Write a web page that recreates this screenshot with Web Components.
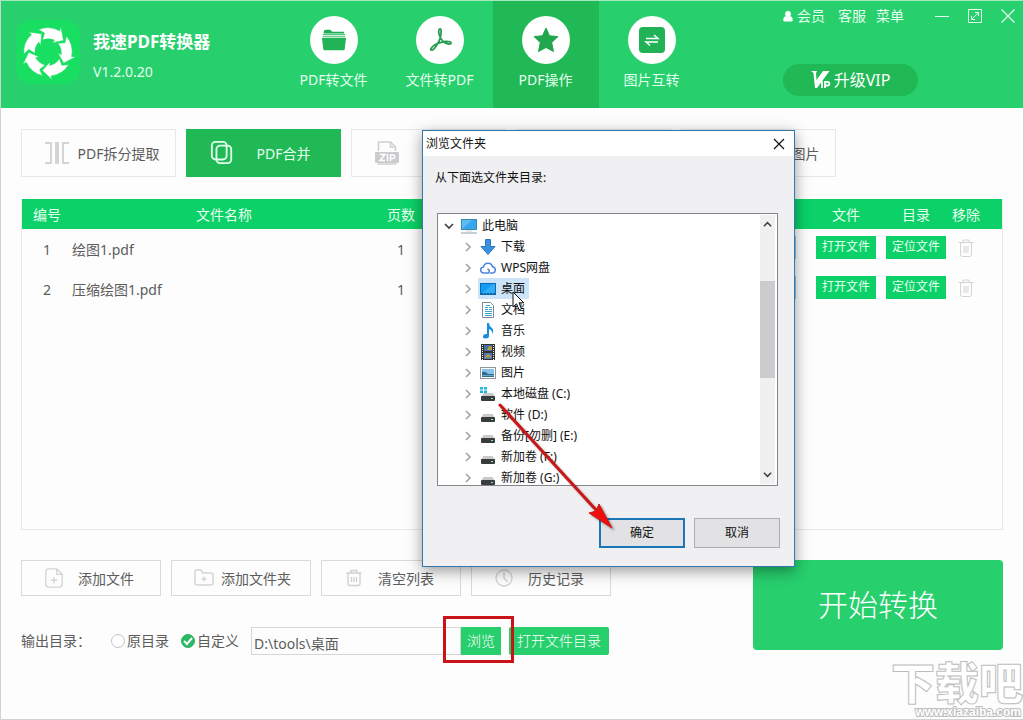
<!DOCTYPE html>
<html lang="zh-CN">
<head>
<meta charset="utf-8">
<title>我速PDF转换器</title>
<style>
    :root {
        --green: #27cf6d;
        --green-dark: #21b955;
        --green-table: #0bd168;
        --line: #e8e8ea;
        --text: #5c5c5c;
    }

    body {
        margin: 0;
        font-family: "Noto Sans", "Noto Sans CJK SC", sans-serif;
        font-size: 14px;
        line-height: 20px;
        color: var(--text);
        background: #fdfdfd;
    }
</style>
</head>
<body>
<app-window></app-window>

<script>
const ICONS = {
    logo: ['0 0 64 64', `
        <rect width="64" height="64" rx="14" fill="#18df62"/>
        <g fill="#fff" stroke="#18df62" stroke-width=".6">
            ${[0, 72, 144, 216, 288].map(a => `<path transform="rotate(${a} 32 32)" d="M22.500 9.700Q33 5 43.500 10.800L45 7 47.500 20.500 36 23 38.500 20.200Q32.500 17.500 26.600 20L28.500 13z"/>`).join('')}
        </g>`],
    folder: ['0 0 28 24', '<path d="M3 5V3q0-2 2-2h5l2 2h12q1 0 1 2z" fill="#1fae57"/><path d="M2 6h24M2 8h24" stroke="#35bd69"/><path d="M1 9.500h26l-1.500 12.500q0 1-1 1h-21q-1 0-1-1z" fill="#21b356"/>'],
    acrobat: ['0 0 26 26', '<path d="M12 2c-1.600 0-1.600 3-.7 6 1.500 4.500 5 8.500 9.300 9 3.300.3 3.300-2.100 0-2.400-4.500-.4-10.500 1.200-14.300 3.600-3 1.900-4.500 5-2.800 5 2.800 0 7.300-7.700 8.800-12.500C13.300 6 13.700 2 12 2z" transform="translate(1 0)" fill="none" stroke="#2a9d53" stroke-width="1.800"/>'],
    star: ['0 0 26 26', '<path d="M13 1l3.500 7.800 8.500.8-6.300 6 1.800 8.900L13 20.500 5.500 24.500l1.800-8.900L1 9.600l8.500-.8z" fill="#20a74d" stroke="#20a74d" stroke-linejoin="round"/>'],
    swap: ['0 0 26 26', '<rect width="26" height="26" rx="4" fill="#21b257"/><path d="M7 11.500h12l-4-3.500M19 15H7l4 3.500" fill="none" stroke="#fff" stroke-width="1.500"/>'],
    user: ['0 0 12 13', '<circle cx="6" cy="3.500" r="3.500" fill="#fff"/><path d="M1 12V9q0-2 2.500-2.500 2.500 1.800 5 0Q11 7 11 9v3z" fill="#fff" stroke="#fff"/>'],
    minimize: ['0 0 16 16', '<path d="M1 8.500h14" stroke="#e4ffef"/>'],
    maximize: ['0 0 16 16', '<path d="M1.500 1.500h13v13h-13zM5 11l6-6M8 4.500h3.500V8M4.500 8v3.500H8" fill="none" stroke="#e4ffef"/>'],
    close: ['0 0 16 16', '<path d="M1.500 1.500l13 13M14.500 1.500l-13 13" stroke="#e4ffef" stroke-width="1.300"/>'],
    vip: ['0 0 20 18', '<path d="M0 0h6l-1 2 .5 7L12 0h6.500L6 17H4L2.500 2z" fill="#fff"/><path d="M11 10v7M14 17v-6.200h2.500a1.800 1.800 0 0 1 0 3.700H14" fill="none" stroke="#fff" stroke-width="1.800"/>'],
    split: ['0 0 24 24', '<path d="M0 2h6v20H0M24 2h-6v20h6" fill="none" stroke="#d5d3d6" stroke-width="2"/><path d="M10 1h4v22h-4z" fill="#d5d3d6"/>'],
    merge: ['0 0 24 26', '<rect x="1" y="1" width="16" height="19" rx="4" fill="none" stroke="#e2ffeb" stroke-width="2"/><rect x="6" y="5" width="16" height="19" rx="4" fill="none" stroke="#e2ffeb" stroke-width="2"/>'],
    zip: ['0 0 24 24', '<path d="M3.500 10V1h12l5 5v4M15.500 1v5h5M3.500 20v3h17v-3" fill="none" stroke="#d0ced1" stroke-width="1.500"/><rect y="11" width="24" height="11" rx="1" fill="#cdcbce"/><path d="M5 13.500h5l-5 6h5M12.500 13v7M15.500 20v-6h2.500a1.500 1.500 0 0 1 0 3.500h-2" fill="none" stroke="#fff" stroke-width="1.500"/>'],
    picture: ['0 0 24 24', '<rect x="1" y="3" width="22" height="18" fill="none" stroke="#d5d3d6" stroke-width="2"/><path d="M3 18l6-7 5 5 3-3 4 5" fill="none" stroke="#d5d3d6" stroke-width="2"/>'],
    trash: ['0 0 16 18', '<path d="M.5 3.500h15M5 3.500V1h6v2.500M2.500 3.500v12q0 2 2 2h7q2 0 2-2v-12M6 7v7M8 7v7M10 7v7" fill="none" stroke="#cfcdd2" stroke-width=".9"/>'],
    addFile: ['0 0 20 22', '<path d="M4 1h9l6 6v11q0 3-3 3H4q-3 0-3-3V4q0-3 3-3zM13 1v6h6M10 10v7M6.500 13.500h7" fill="none" stroke="#d5d5d5" stroke-width="1.500"/>'],
    addFolder: ['0 0 20 18', '<path d="M1 3q0-2 2-2h4l2 3h8q2 0 2 2v8q0 2-2 2H3q-2 0-2-2zM10 7.500v5M7.500 10h5" fill="none" stroke="#d5d5d5" stroke-width="1.500"/>'],
    clear: ['0 0 18 20', '<path d="M1.500 5h15M6 5V2.500h6V5M3 5v10.500q0 2 2 2h8q2 0 2-2V5M6.500 9v5M9 9v5M11.500 9v5" fill="none" stroke="#d0d0d0" stroke-width="1.300"/>'],
    clock: ['0 0 20 20', '<circle cx="10" cy="10" r="8" fill="none" stroke="#d0d0d0" stroke-width="1.300"/><path d="M10 4v6l3.500 4" fill="none" stroke="#d0d0d0" stroke-width="1.300"/>'],
    closeDark: ['0 0 12 12', '<path d="M1 1l10 10M11 1L1 11" stroke="#111" stroke-width="1.200"/>'],
    chevronRight: ['0 0 10 10', '<path d="M3 1l4 4-4 4" fill="none" stroke="#a3a3a3" stroke-width="1.600"/>'],
    chevronDown: ['0 0 10 10', '<path d="M1 3l4 4 4-4" fill="none" stroke="#404040" stroke-width="1.700"/>'],
    chevronUp: ['0 0 10 10', '<path d="M1 7l4-4 4 4" fill="none" stroke="#404040" stroke-width="1.700"/>'],
    computer: ['0 0 16 16', '<rect x=".5" y="1.500" width="15" height="10" fill="#5dbcf5" stroke="#3d87ad"/><path d="M1 11L11 2h4v9z" fill="#39a5ec"/><path d="M5 13h6" stroke="#c5d5dc"/><path d="M0 15h16" stroke="#8ba0a9"/>'],
    download: ['0 0 16 16', '<path d="M5.500.5h5v7H15L8 15.500 1 7.500h4.500z" fill="#3a8fe0" stroke="#2d78bf"/>'],
    cloud: ['0 0 16 16', '<path d="M4 13a3 3 0 0 1-.5-6 4.600 4.600 0 0 1 9-.3 3.200 3.200 0 0 1 .3 6.300H10M4 13h4.500q2-3-1-4" fill="none" stroke="#4c86dc" stroke-width="1.500"/>'],
    desktop: ['0 0 16 16', '<rect x=".5" y="2.500" width="15" height="11" fill="#129cf3" stroke="#0c6bb0"/><path d="M1 13L13 3h2v10z" fill="#33adf7"/><path d="M1 12.500h14" stroke="#0d5f9e" stroke-dasharray="2 1"/>'],
    document: ['0 0 16 16', '<path d="M2.500.5h8l3 3v12h-11z" fill="#fff" stroke="#7e8b93"/><path d="M5 5.500h3M9 5.500h3M5 7.500h3M9 7.500h3M5 9.500h7M5 11.500h7M5 13.500h7M6 3.500h4" stroke="#3fa2cf"/>'],
    music: ['0 0 16 16', '<path d="M7 0h2q0 3 3 5 2.500 2.500 0 6 .5-4-3-5v7q0 2.500-3.500 2.500-3 0-2.500-2.500.8-2.500 4-2z" fill="#168fdc"/>'],
    video: ['0 0 16 16', '<path d="M1 0h14v16H1z" fill="#333"/><path d="M2.500 1v15M13.500 1v15" stroke="#e8e8e8" stroke-dasharray="1 1"/><path d="M4 1h8v6H4z" fill="#496fa5"/><path d="M4 9h8v6H4z" fill="#5579b6"/><path d="M7 6l2-4 3 1v3zM4 14l4-4 4 3z" fill="#b59a48"/>'],
    image: ['0 0 16 16', '<rect x=".5" y="2.500" width="15" height="11" fill="#fff" stroke="#8e979c"/><path d="M2 4h12v8H2z" fill="#87c2ed"/><path d="M2 7q4-1 6 2h6v3H2z" fill="#356d86"/><path d="M2 10.500h12" stroke="#5fa7cc"/>'],
    drive: ['0 0 16 16', '<path d="M3.500 7h9l2.500 4H1z" fill="#c9c9c9"/><rect x="1" y="10" width="14" height="5" rx="1" fill="#383c3e"/><path d="M11 12.500h2" stroke="#7df6a2"/>'],
    system: ['0 0 16 16', '<path d="M4 7h9l2 4H1z" fill="#c9c9c9"/><rect x="1" y="10" width="14" height="5" rx="1" fill="#383c3e"/><path d="M11 12.500h2" stroke="#7df6a2"/><path d="M0 1h3v2.500H0zM4 1h3v2.500H4zM0 4.500h3V7H0zM4 4.500h3V7H4z" fill="#22b3da"/>']
};

class AppIcon extends HTMLElement {
    connectedCallback() {
        const [box, shapes] = ICONS[this.getAttribute('name')];
        this.attachShadow({ mode: 'open' }).innerHTML = `
            <style>
                :host { display: inline-block; flex: none; width: 16px; height: 16px; }
                svg { display: block; width: 100%; height: 100%; }
            </style>
            <svg viewBox="${box}" aria-hidden="true">${shapes}</svg>
        `;
    }
}

class NavTab extends HTMLElement {
    connectedCallback() {
        this.attachShadow({ mode: 'open' }).innerHTML = `
            <style>
                :host { display: block; width: 106px; }
                button {
                    display: flex;
                    flex-direction: column;
                    align-items: center;
                    gap: 6px;
                    width: 100%;
                    height: 100%;
                    padding: 15px 1px 0 0;
                    border: 0;
                    background: none;
                    font: inherit;
                    color: #e4ffef;
                }
                :host([active]) button { background: var(--green-dark); }
                .disc {
                    display: flex;
                    align-items: center;
                    justify-content: center;
                    width: 48px;
                    height: 48px;
                    border-radius: 50%;
                    background: #fff;
                }
                app-icon { width: 26px; height: 26px; }
            </style>
            <button type="button">
                <span class="disc"><app-icon name="${this.getAttribute('icon')}"></app-icon></span>
                <slot></slot>
            </button>
        `;
    }
}

class AppHeader extends HTMLElement {
    connectedCallback() {
        this.attachShadow({ mode: 'open' }).innerHTML = `
            <style>
                :host {
                    display: flex;
                    height: 107px;
                    background: var(--green);
                    color: #e4ffef;
                }
                .brand {
                    display: flex;
                    align-items: center;
                    gap: 13px;
                    width: 265px;
                    padding-left: 15px;
                }
                .brand app-icon { width: 64px; height: 64px; margin-bottom: 6px; }
                .brand div { padding-top: 2px; }
                h1 { margin: 0 0 8px; font-size: 17px; line-height: 24px; color: #fff; }
                p { margin: 0; }
                nav { display: flex; }
                .side {
                    display: flex;
                    flex-direction: column;
                    gap: 38px;
                    width: 233px;
                    margin-left: auto;
                    padding: 5px 7px 0 0;
                }
                .top, .links, .controls { display: flex; align-items: center; }
                .top { justify-content: space-between; }
                .links { gap: 10px; }
                a { display: flex; align-items: center; gap: 4px; color: inherit; text-decoration: none; }
                a:first-child { margin-right: 3px; }
                a app-icon { width: 10px; height: 13px; }
                .controls { gap: 17px; }
                .controls button { display: flex; padding: 0; border: 0; background: none; }
                .vip {
                    display: flex;
                    align-items: center;
                    justify-content: center;
                    gap: 3px;
                    width: 135px;
                    height: 32px;
                    padding: 0;
                    border: 0;
                    border-radius: 16px;
                    background: var(--green-dark);
                    font: inherit;
                    font-size: 16px;
                    color: #fff;
                }
                .vip app-icon { width: 20px; height: 18px; }
            </style>
            <div class="brand">
                <app-icon name="logo"></app-icon>
                <div>
                    <h1>我速PDF转换器</h1>
                    <p>V1.2.0.20</p>
                </div>
            </div>
            <nav>
                <nav-tab icon="folder">PDF转文件</nav-tab>
                <nav-tab icon="acrobat">文件转PDF</nav-tab>
                <nav-tab icon="star" active>PDF操作</nav-tab>
                <nav-tab icon="swap">图片互转</nav-tab>
            </nav>
            <div class="side">
                <div class="top">
                    <div class="links">
                        <a href="#"><app-icon name="user"></app-icon>会员</a>
                        <a href="#">客服</a>
                        <a href="#">菜单</a>
                    </div>
                    <div class="controls">
                        <button type="button" aria-label="最小化"><app-icon name="minimize"></app-icon></button>
                        <button type="button" aria-label="最大化"><app-icon name="maximize"></app-icon></button>
                        <button type="button" aria-label="关闭"><app-icon name="close"></app-icon></button>
                    </div>
                </div>
                <button class="vip" type="button"><app-icon name="vip"></app-icon>升级VIP</button>
            </div>
        `;
    }
}

// Outlined button with an icon; size="large" is the tool row, the default is the list row
class ActionButton extends HTMLElement {
    connectedCallback() {
        this.attachShadow({ mode: 'open' }).innerHTML = `
            <style>
                :host { display: block; width: 140px; height: 36px; }
                :host([size="large"]) { width: 155px; height: 48px; }
                button {
                    display: flex;
                    align-items: center;
                    width: 100%;
                    height: 100%;
                    padding: 0 0 0 22px;
                    border: 1px solid #dadada;
                    background: #fdfdfd;
                    font: inherit;
                    color: inherit;
                }
                :host([size="large"]) button { border-color: var(--line); }
                :host([active]) button {
                    border-color: var(--green-dark);
                    background: var(--green-dark);
                    color: #e4ffef;
                }
                app-icon { width: 20px; height: 20px; }
                :host([size="large"]) app-icon { width: 26px; height: 24px; }
                .label { flex: 1; padding: 1px 12px 0 0; text-align: center; }
                :host([size="large"]) .label { padding-right: 8px; }
            </style>
            <button type="button">
                <app-icon name="${this.getAttribute('icon')}"></app-icon>
                <span class="label"><slot></slot></span>
            </button>
        `;
    }
}

class FileTable extends HTMLElement {
    connectedCallback() {
        const files = [
            { name: '绘图1.pdf', pages: 1 },
            { name: '压缩绘图1.pdf', pages: 1 }
        ];
        this.attachShadow({ mode: 'open' }).innerHTML = `
            <style>
                :host { display: block; border: 1px solid var(--line); border-top: 0; }
                table { width: 100%; border-collapse: collapse; table-layout: fixed; }
                th { height: 29px; padding: 1px 0 0; background: var(--green-table); color: #e4ffef; font-weight: 400; }
                td { height: 38px; padding: 2px 0 0; text-align: center; }
                .num { width: 50px; }
                .name { width: 304px; }
                .act { width: 70px; }
                .del { width: 30px; padding-right: 21px; }
                td.name { text-align: left; }
                td.range { text-align: right; }
                td.act, td.range { height: 36px; padding: 0 0 4px; }
                td.del { height: 38px; padding: 0 21px 2px 0; }
                input {
                    box-sizing: border-box;
                    width: 120px;
                    height: 23px;
                    margin-right: 15px;
                    border: 1px solid #8fc3ee;
                    background: #fff;
                }
                .act button {
                    width: 60px;
                    height: 23px;
                    padding: 0;
                    border: 0;
                    background: var(--green-table);
                    font: inherit;
                    font-size: 12px;
                    color: #e4ffef;
                }
                .del button { display: block; margin: 0 auto; padding: 0; border: 0; background: none; }
                .del app-icon { display: block; height: 18px; }
            </style>
            <table>
                <thead>
                    <tr>
                        <th class="num">编号</th>
                        <th class="name">文件名称</th>
                        <th class="num">页数</th>
                        <th class="range"></th>
                        <th class="act">文件</th>
                        <th class="act">目录</th>
                        <th class="del">移除</th>
                    </tr>
                </thead>
                <tbody>
                    ${files.map((file, i) => `
                        <tr>
                            <td>${i + 1}</td>
                            <td class="name">${file.name}</td>
                            <td>${file.pages}</td>
                            <td class="range"><input type="text" aria-label="页码范围"></td>
                            <td class="act"><button type="button">打开文件</button></td>
                            <td class="act"><button type="button">定位文件</button></td>
                            <td class="del"><button type="button" aria-label="移除"><app-icon name="trash"></app-icon></button></td>
                        </tr>
                    `).join('')}
                </tbody>
            </table>
        `;
    }
}

class OutputBar extends HTMLElement {
    connectedCallback() {
        this.attachShadow({ mode: 'open' }).innerHTML = `
            <style>
                :host { display: flex; align-items: center; height: 28px; }
                .title { width: 90px; }
                label { display: flex; align-items: center; gap: 2px; margin-right: 12px; }
                input[type="radio"] {
                    appearance: none;
                    width: 14px;
                    height: 14px;
                    margin: 0;
                    border: 1px solid #c4c4c4;
                    border-radius: 50%;
                    background: #fff;
                }
                input[type="radio"]:checked {
                    border-color: #2bb863;
                    background: #2bb863 url("data:image/svg+xml,%3Csvg xmlns='http://www.w3.org/2000/svg' viewBox='0 0 12 12'%3E%3Cpath d='M2 6l3 3 5-6' fill='none' stroke='white' stroke-width='2'/%3E%3C/svg%3E");
                }
                input[type="text"] {
                    box-sizing: border-box;
                    width: 210px;
                    height: 28px;
                    padding: 3px 2px 0;
                    border: 1px solid #d6d6d6;
                    background: #fdfdfd;
                    font: inherit;
                    color: inherit;
                }
                button {
                    height: 28px;
                    padding: 0;
                    border: 0;
                    background: var(--green);
                    font: inherit;
                    font-weight: 300;
                    color: #fff;
                }
                .browse { position: relative; display: flex; margin-right: 8px; }
                .browse button { width: 40px; }
                .browse::after {
                    content: '';
                    position: absolute;
                    inset: -11px -13px -8px -18px;
                    border: 3px solid #ca1316;
                }
                .open { width: 100px; border-radius: 2px; }
            </style>
            <span class="title">输出目录：</span>
            <label><input type="radio" name="target">原目录</label>
            <label><input type="radio" name="target" checked>自定义</label>
            <input type="text" value="D:\\tools\\桌面" aria-label="输出目录">
            <span class="browse"><button type="button">浏览</button></span>
            <button class="open" type="button">打开文件目录</button>
        `;
    }
}

class TreeItem extends HTMLElement {
    connectedCallback() {
        const open = this.hasAttribute('open');
        this.attachShadow({ mode: 'open' }).innerHTML = `
            <style>
                :host { display: flex; align-items: center; gap: 5px; height: 21px; padding-left: 25px; }
                :host([open]) { padding-left: 6px; }
                .chevron { width: 10px; height: 10px; }
                .entry {
                    display: flex;
                    align-items: center;
                    gap: 5px;
                    height: 21px;
                    padding: 0 4px 0 2px;
                }
                :host([selected]) .entry { background: #cce4fa; }
            </style>
            <app-icon class="chevron" name="${open ? 'chevronDown' : 'chevronRight'}"></app-icon>
            <span class="entry">
                <app-icon name="${this.getAttribute('icon')}"></app-icon>
                <slot></slot>
            </span>
        `;
    }
}

class FolderDialog extends HTMLElement {
    connectedCallback() {
        this.attachShadow({ mode: 'open' }).innerHTML = `
            <style>
                :host {
                    display: block;
                    box-sizing: border-box;
                    width: 373px;
                    border: 1px solid #3479ad;
                    background: #f0eff1;
                    box-shadow: 0 4px 14px rgba(0, 0, 0, 0.4);
                    font-size: 12px;
                    line-height: 18px;
                    color: #111;
                }
                header {
                    display: flex;
                    align-items: center;
                    justify-content: space-between;
                    height: 25px;
                    padding: 0 9px 0 3px;
                    background: #fff;
                }
                header button { display: flex; padding: 0; border: 0; background: none; }
                header app-icon { width: 12px; height: 12px; }
                p { margin: 13px 12px 26px; }
                .tree {
                    display: flex;
                    box-sizing: border-box;
                    height: 273px;
                    margin: 0 16px 0 14px;
                    border: 1px solid #84868c;
                    background: #fff;
                    overflow: hidden;
                }
                .items { flex: 1; padding-top: 1px; }
                .scroll {
                    display: flex;
                    flex-direction: column;
                    align-items: center;
                    justify-content: space-between;
                    width: 15px;
                    margin: 1px 2px 1px 0;
                    padding: 5px 0;
                    box-sizing: border-box;
                    background: #f0f0f0;
                }
                .scroll app-icon { width: 9px; height: 9px; }
                .thumb { width: 15px; height: 97px; margin-bottom: 40px; background: #cdcbce; }
                footer { display: flex; justify-content: flex-end; gap: 9px; padding: 32px 14px 18px; }
                footer button {
                    box-sizing: border-box;
                    width: 86px;
                    height: 30px;
                    border: 1px solid #adadad;
                    background: #e2e1e3;
                    font: inherit;
                    color: inherit;
                }
                footer .ok { border: 2px solid #1b76b8; }
                .marks { position: absolute; inset: 0; width: 100%; height: 100%; overflow: visible; pointer-events: none; }
            </style>
            <header>浏览文件夹<button type="button" aria-label="关闭"><app-icon name="closeDark"></app-icon></button></header>
            <p>从下面选文件夹目录:</p>
            <div class="tree">
                <div class="items"><slot></slot></div>
                <div class="scroll">
                    <app-icon name="chevronUp"></app-icon>
                    <div class="thumb"></div>
                    <app-icon name="chevronDown"></app-icon>
                </div>
            </div>
            <footer>
                <button class="ok" type="button">确定</button>
                <button type="button">取消</button>
            </footer>
            <svg class="marks" aria-hidden="true">
                <path d="M90 161v15l3.500-3.200 2.500 6 2.500-1-2.500-6h4.800z" fill="#fff" stroke="#111"/>
                <g style="filter: drop-shadow(2px 2px 1px rgba(0, 0, 0, 0.35))">
                    <path d="M77 274l97 106" stroke="#c91616" stroke-width="3" stroke-linecap="round"/>
                    <path d="M189 397l-23-15 7-2 3-7z" fill="#f00d0d" stroke="#c91616"/>
                </g>
            </svg>
        `;
    }
}

class SiteMark extends HTMLElement {
    connectedCallback() {
        this.attachShadow({ mode: 'open' }).innerHTML = `
            <style>
                :host { display: block; text-align: right; color: #fff; -webkit-text-stroke: 1px #bdbdbd; }
                .name { font-size: 44px; line-height: 44px; font-weight: 900; }
                .url {
                    padding-right: 2px;
                    font: bold 12px/14px "Liberation Sans", sans-serif;
                    color: #fff;
                    paint-order: stroke;
                    -webkit-text-stroke: 2px #bdbdbd;
                }
                div { white-space: nowrap; }
            </style>
            <div class="name">下载吧</div>
            <div class="url">www.xiazaiba.com</div>
        `;
    }
}

class AppWindow extends HTMLElement {
    connectedCallback() {
        this.attachShadow({ mode: 'open' }).innerHTML = `
            <style>
                :host {
                    display: flex;
                    flex-direction: column;
                    position: relative;
                    box-sizing: border-box;
                    min-height: 100vh;
                    border: 1px solid #d2d2d2;
                    border-top-color: #a5e8c0;
                    overflow: hidden;
                }
                main { flex: 1; display: flex; flex-direction: column; padding: 21px 20px 64px; }
                .tools, .list-actions { display: flex; gap: 10px; }
                .tools { margin-bottom: 22px; }
                file-table { flex: 1; margin-bottom: 30px; }
                .bottom { display: flex; justify-content: space-between; }
                .list-actions { margin-bottom: 31px; }
                .start {
                    width: 250px;
                    height: 90px;
                    border: 0;
                    border-radius: 4px;
                    background: var(--green);
                    font: inherit;
                    font-size: 30px;
                    font-weight: 300;
                    color: #fff;
                }
                folder-dialog { position: absolute; left: 421px; top: 129px; }
                site-mark { position: absolute; right: 0; bottom: 0; }
            </style>
            <app-header></app-header>
            <main>
                <div class="tools">
                    <action-button size="large" icon="split">PDF拆分提取</action-button>
                    <action-button size="large" icon="merge" active>PDF合并</action-button>
                    <action-button size="large" icon="zip">PDF压缩</action-button>
                    <action-button size="large" icon="picture">PDF加密</action-button>
                    <action-button size="large" icon="picture">PDF获取图片</action-button>
                </div>
                <file-table></file-table>
                <div class="bottom">
                    <div>
                        <div class="list-actions">
                            <action-button icon="addFile">添加文件</action-button>
                            <action-button icon="addFolder">添加文件夹</action-button>
                            <action-button icon="clear">清空列表</action-button>
                            <action-button icon="clock">历史记录</action-button>
                        </div>
                        <output-bar></output-bar>
                    </div>
                    <button class="start" type="button">开始转换</button>
                </div>
            </main>
            <site-mark></site-mark>
            <folder-dialog>
                <tree-item icon="computer" open>此电脑</tree-item>
                <tree-item icon="download">下载</tree-item>
                <tree-item icon="cloud">WPS网盘</tree-item>
                <tree-item icon="desktop" selected>桌面</tree-item>
                <tree-item icon="document">文档</tree-item>
                <tree-item icon="music">音乐</tree-item>
                <tree-item icon="video">视频</tree-item>
                <tree-item icon="image">图片</tree-item>
                <tree-item icon="system">本地磁盘 (C:)</tree-item>
                <tree-item icon="drive">软件 (D:)</tree-item>
                <tree-item icon="drive">备份[勿删] (E:)</tree-item>
                <tree-item icon="drive">新加卷 (F:)</tree-item>
                <tree-item icon="drive">新加卷 (G:)</tree-item>
            </folder-dialog>
        `;
    }
}

customElements.define('app-icon', AppIcon);
customElements.define('nav-tab', NavTab);
customElements.define('app-header', AppHeader);
customElements.define('action-button', ActionButton);
customElements.define('file-table', FileTable);
customElements.define('output-bar', OutputBar);
customElements.define('tree-item', TreeItem);
customElements.define('folder-dialog', FolderDialog);
customElements.define('site-mark', SiteMark);
customElements.define('app-window', AppWindow);
</script>
</body>
</html>
